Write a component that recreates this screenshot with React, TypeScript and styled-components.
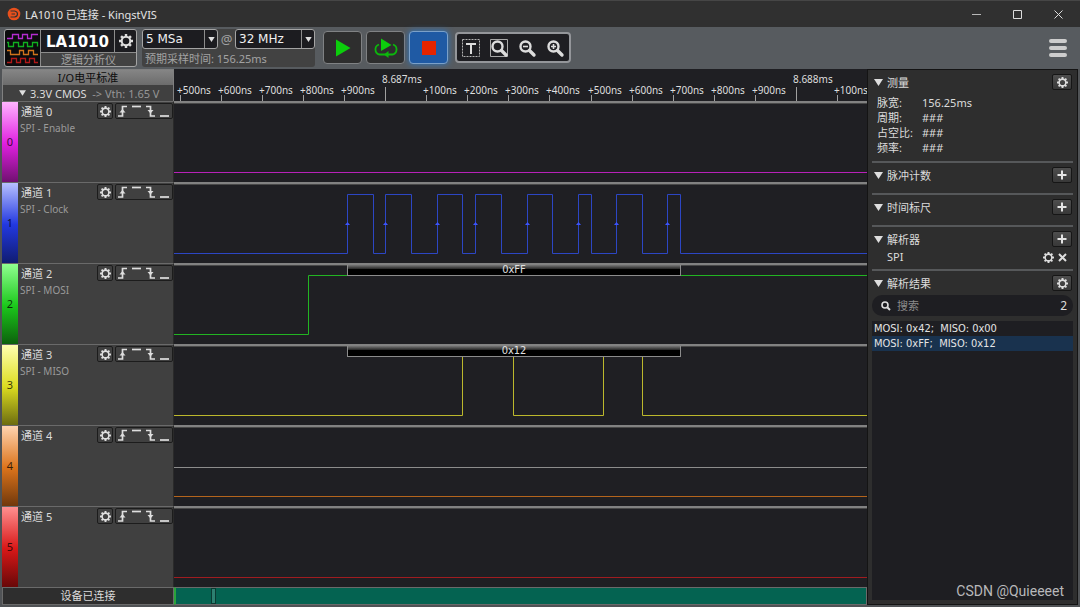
import React from "react";
import styled, { createGlobalStyle, css } from "styled-components";

const GlobalStyle = createGlobalStyle`
  *, *::before, *::after { box-sizing: border-box; }
  html, body { margin: 0; padding: 0; background: #505356; }
  body {
    font-family: "Noto Sans", "Noto Sans CJK SC", sans-serif;
    font-size: 11px;
    color: #dcdcdc;
  }
  button, input, select { font: inherit; color: inherit; margin: 0; padding: 0; }
  h1, h2, ul, dl, dd, dt, p { margin: 0; padding: 0; font: inherit; list-style: none; }
  svg { display: block; flex: none; }
`;

const Window = styled.div`
  display: flex;
  flex-direction: column;
  min-height: 100vh;
  background: #505356;
`;

const TitleBar = styled.header`
  display: flex;
  align-items: center;
  height: 27px;
  padding: 0 1px 0 7px;
  gap: 4px;
  background: #303030;
  border-top: 1px solid #464646;
`;

const Title = styled.h1`
  flex: 1;
  color: #e4e4e4;
`;

const WindowButton = styled.button`
  display: grid;
  place-items: center;
  width: 41px;
  height: 26px;
  border: 0;
  background: none;
`;

const WindowButtons = styled.div`
  display: flex;
`;

const ToolBar = styled.div`
  display: flex;
  align-items: center;
  height: 42px;
  padding: 0 11px 0 4px;
  background: #575b5f;
`;

const Device = styled.div`
  display: grid;
  grid-template-columns: 35px 73px 21px;
  grid-template-rows: 22px 13px;
  gap: 1px;
  border: 1px solid #a4a4a4;
  border-radius: 3px;
  background: #8c8c8c;
  overflow: hidden;
`;

const DeviceLogo = styled.div`
  grid-row: 1 / 3;
  background: #0b0b0d;
`;

const DeviceName = styled.div`
  background: #1c1c20;
  color: #fff;
  font: bold 15px/24px "DejaVu Sans", sans-serif;
  text-align: center;
`;

const DeviceGear = styled.button`
  display: grid;
  place-items: center;
  border: 0;
  background: #1c1c20;
`;

const DeviceKind = styled.div`
  grid-column: 2 / 4;
  background: #424242;
  color: #a2a2a2;
  line-height: 13px;
  text-align: center;
`;

const Sampling = styled.div`
  width: 173px;
  height: 38px;
  margin-left: 5px;
  border-radius: 3px;
  background: #424242;
  color: #a2a2a2;
`;

const SamplingRow = styled.div`
  display: flex;
  align-items: center;
  justify-content: space-between;
  font-size: 13px;
  line-height: 20px;
`;

const SamplingNote = styled.p`
  padding-left: 3px;
  line-height: 20px;
`;

const SelectBox = styled.label<{ $wide?: boolean }>`
  position: relative;
  display: block;
  width: ${(p) => (p.$wide ? 80 : 76)}px;
  height: 20px;
  border: 1px solid #a4a4a4;
  border-radius: 3px;
  background: #1c1c20;
`;

const Select = styled.select`
  display: block;
  width: 100%;
  height: 18px;
  padding-left: 3px;
  border: 0;
  background: none;
  color: #f0f0f0;
  appearance: none;
  font: 12px/18px "DejaVu Sans", sans-serif;
`;

const SelectArrow = styled.span`
  position: absolute;
  top: 0;
  right: 0;
  display: grid;
  place-items: center;
  width: 13px;
  height: 18px;
  border-left: 1px solid #8c8c8c;
  pointer-events: none;
`;

const RunButtons = styled.div`
  display: flex;
  gap: 4px;
  margin: 0 7px 1px 8px;
`;

const RunButton = styled.button<{ $active?: boolean }>`
  display: grid;
  place-items: center;
  width: 39px;
  height: 33px;
  border: 1px solid #808284;
  border-radius: 4px;
  background: #2e2e2e;
  ${(p) =>
    p.$active &&
    css`
      background: #1f5aa4;
      border-color: #7ba0c8;
      box-shadow: 0 0 6px #2a78c8;
    `}
`;

const ViewTools = styled.div`
  display: flex;
  align-items: center;
  justify-content: space-around;
  width: 116px;
  height: 31px;
  margin-bottom: 1px;
  border: 2px solid #94969a;
  border-radius: 4px;
  background: #1e1e22;
`;

const PlainButton = styled.button`
  display: grid;
  place-items: center;
  border: 0;
  background: none;
`;

const MenuButton = styled(PlainButton)`
  margin-left: auto;
`;

const Body = styled.div`
  flex: 1;
  display: grid;
  grid-template-columns: 172px minmax(0, 1fr) 211px;
  padding: 0 2px 3px 2px;
`;

const Workspace = styled.main`
  grid-column: 1 / 3;
  display: flex;
  flex-direction: column;
  background: #1f1f23;
`;

const Row = styled.div`
  display: grid;
  grid-template-columns: 172px minmax(0, 1fr);
`;

const RulerRow = styled(Row)`
  height: 32px;
`;

const LevelPanel = styled.div`
  display: flex;
  flex-direction: column;
  border: 1px solid #808080;
  border-bottom: 0;
`;

const LevelTitle = styled.div`
  height: 15px;
  background: linear-gradient(#858585, #6c6c6c);
  color: #0c0c0c;
  line-height: 15px;
  text-align: center;
`;

const LevelButton = styled.button`
  display: flex;
  align-items: center;
  gap: 4px;
  height: 16px;
  padding-left: 16px;
  border: 0;
  background: #404040;
  white-space: pre;
`;

const Muted = styled.span`
  color: #969696;
`;

const RulerSvg = styled.svg`
  width: 100%;
  height: 32px;
  font: 10px "Noto Sans", sans-serif;
  fill: #dedede;
`;

const ChannelRow = styled(Row)`
  height: 81px;
`;

const ChannelPanel = styled.section`
  display: flex;
  background: #404040;
  border-top: 1px solid #6a6a6a;
  border-right: 1px solid #2a2a2a;
  border-bottom: 1px solid #161616;
`;

const ChannelTab = styled.div<{ $from: string; $mid: string; $to: string }>`
  width: 16px;
  background: linear-gradient(${(p) => p.$from}, ${(p) => p.$mid} 52%, ${(p) => p.$to});
  color: rgba(0, 0, 0, 0.75);
  line-height: 80px;
  text-align: center;
`;

const ChannelInfo = styled.div`
  flex: 1;
  padding: 1px 0 0 2px;
`;

const ChannelHead = styled.div`
  display: flex;
  align-items: center;
  gap: 2px;
  height: 16px;
  padding-left: 1px;
`;

const ChannelName = styled.h2`
  flex: 1;
`;

const ChannelRole = styled.p`
  color: #9a9a9a;
  font-size: 10px;
  line-height: 18px;
`;

const ChannelGear = styled.button`
  display: grid;
  place-items: center;
  width: 16px;
  height: 16px;
  border: 1px solid #1c1c1c;
  border-radius: 2px;
  background: #404040;
`;

const Triggers = styled.div`
  display: flex;
  height: 16px;
  border: 1px solid #1c1c1c;
  border-radius: 2px;
`;

const Track = styled.div`
  position: relative;
  height: 81px;
  overflow: hidden;
  background: #1f1f23;
  border-top: 2px solid #828282;
  box-shadow: inset 0 1px 0 #484848;
`;

const Wave = styled.svg`
  position: absolute;
  left: 0;
  top: -2px;
  width: 100%;
  height: 81px;
  fill: none;
`;

const DecodeBox = styled.div`
  position: absolute;
  left: 173px;
  top: -2px;
  width: 334px;
  height: 13px;
  border: 1px solid #8c8c8c;
  border-top-color: #a0a0a0;
  background: linear-gradient(#8c8c8c, #262626 45%, #000 50%);
  color: #e0e0e0;
  font: 11px/12px "DejaVu Sans Condensed", "Noto Sans", sans-serif;
  text-align: center;
`;

const FooterRow = styled(Row)`
  flex: 1;
  min-height: 17px;
`;

const Status = styled.div`
  border: 1px solid #6a6a6a;
  background: #2e2e2e;
  line-height: 16px;
  text-align: center;
`;

const Overview = styled.div`
  position: relative;
  border: 1px solid #6a6a6a;
  border-left: 2px solid #2aa33a;
  background: #046351;
`;

const OverviewThumb = styled.div`
  position: absolute;
  left: 35px;
  top: 0;
  bottom: 0;
  width: 5px;
  border: 1px solid #0a3a32;
  background: #2d8071;
`;

const Sidebar = styled.aside`
  position: relative;
  display: flex;
  flex-direction: column;
  padding: 0 4px 4px 4px;
  border: 1px solid #141414;
  background: #2e2e2e;
`;

const Section = styled.section<{ $first?: boolean; $grow?: boolean }>`
  display: flex;
  flex-direction: column;
  padding-bottom: ${(p) => (p.$grow ? 0 : 6)}px;
  border-top: ${(p) => (p.$first ? 0 : 2)}px solid #56585a;
  flex: ${(p) => (p.$grow ? 1 : "none")};
`;

const SectionHead = styled.div`
  display: flex;
  align-items: center;
  gap: 4px;
  height: 24px;
  padding: 0 1px 0 2px;
`;

const SectionTitle = styled.h2`
  flex: 1;
`;

const SectionButton = styled.button`
  display: grid;
  place-items: center;
  width: 20px;
  height: 16px;
  border: 1px solid #161616;
  border-radius: 2px;
  background: linear-gradient(#4e4e4e, #383838);
`;

const Measures = styled.dl`
  display: grid;
  grid-template-columns: 45px 1fr;
  padding: 1px 0 0 5px;
  line-height: 15px;
`;

const Parser = styled.div`
  display: flex;
  align-items: center;
  gap: 4px;
  height: 12px;
  padding: 0 6px 0 15px;
  line-height: 12px;
`;

const ParserName = styled.span`
  flex: 1;
`;

const Search = styled.label`
  display: flex;
  align-items: center;
  gap: 6px;
  height: 21px;
  padding: 0 6px 0 9px;
  border-radius: 10px;
  background: #1e1e22;
`;

const SearchInput = styled.input`
  flex: 1;
  min-width: 0;
  border: 0;
  outline: 0;
  background: none;
  &::placeholder { color: #8a8a8a; opacity: 1; }
`;

const SearchCount = styled.span`
  font-size: 12px;
`;

const Results = styled.ul`
  flex: 1;
  margin-top: 5px;
  background: #1e1e22;
  font: 11px/15px "DejaVu Sans Condensed", "Noto Sans", sans-serif;
`;

const Result = styled.li<{ $selected?: boolean }>`
  padding-left: 2px;
  background: ${(p) => (p.$selected ? "#19324e" : "transparent")};
  color: #e4e4e4;
  white-space: pre;
`;

const Watermark = styled.p`
  position: absolute;
  right: 13px;
  bottom: 5px;
  color: #b8b8ba;
  font: 14px/16px Roboto, sans-serif;
`;

const Gear = ({ size = 11 }: { size?: number }) => (
  <svg width={size} height={size} viewBox="-8 -8 16 16" fill="none" stroke="#dedede">
    <circle r="4.900" strokeWidth="2.300" />
    {[0, 45, 90, 135, 180, 225, 270, 315].map((a) => (
      <path key={a} d="M0 -5V-8" strokeWidth="2.800" transform={`rotate(${a})`} />
    ))}
  </svg>
);

const Plus = () => (
  <svg width="10" height="10" stroke="#e4e4e4" strokeWidth="2">
    <path d="M5 0.500V9.500M0.500 5H9.500" />
  </svg>
);

const Triangle = ({ w = 9, h = 7 }: { w?: number; h?: number }) => (
  <svg width={w} height={h} viewBox="0 0 9 7" fill="#dedede">
    <path d="M0 0H9L4.500 7Z" />
  </svg>
);

const Magnifier = ({ sign, framed }: { sign?: string; framed?: boolean }) => (
  <svg width="20" height="20" fill="none" stroke="#dcdcdc">
    {framed && <path d="M1.500 1.500H18.500V18.500H1.500Z" stroke="#a8a8a8" />}
    <circle cx="8.500" cy="8.500" r="5" strokeWidth="2.400" />
    <path d="M12.500 12.500L17 17" strokeWidth="3.400" strokeLinecap="round" />
    {sign && <path d={sign} strokeWidth="1.600" />}
  </svg>
);

const triggerShapes = [
  { label: "上升沿", d: "M2 12H6.500V2.500H11", arrow: "M3.500 8.500H9.500L6.500 5Z" },
  { label: "高电平", d: "M2 2.500H11", arrow: "" },
  { label: "下降沿", d: "M2 2.500H6.500V12H11", arrow: "M3.500 6H9.500L6.500 9.500Z" },
  { label: "低电平", d: "M2 12H11", arrow: "" },
];

const clockEdges = [
  [173, 199], [211, 237], [263, 288], [301, 327],
  [353, 378], [404, 417], [442, 468], [493, 506],
];

const clockPath =
  "M0 71.500" + clockEdges.map(([a, b]) => `H${a + 0.5}V12.500H${b + 0.5}V71.500`).join("") + "H9999";

type Channel = {
  role?: string;
  tab: [string, string, string];
  stroke: string;
  d: string;
  decoded?: string;
  arrows?: boolean;
  guide?: boolean;
};

const channels: Channel[] = [
  { role: "SPI - Enable", tab: ["#ffb4ff", "#e020e0", "#701070"], stroke: "#b821b8", d: "M0 71.500H9999" },
  { role: "SPI - Clock", tab: ["#b8c0ff", "#2238e0", "#101c70"], stroke: "#2c46c4", d: clockPath, arrows: true },
  { role: "SPI - MOSI", tab: ["#90ff90", "#1cc81c", "#0c600c"], stroke: "#22b422", d: "M0 71.500H134.500V12.500H9999", decoded: "0xFF" },
  {
    role: "SPI - MISO", tab: ["#ffffb0", "#dcdc20", "#6c6c10"], stroke: "#bcb82c", decoded: "0x12",
    d: "M0 71.500H288.500V12.500H339.500V71.500H429.500V12.500H468.500V71.500H9999",
  },
  { tab: ["#ffd4b0", "#dc741c", "#70380c"], stroke: "#b4641c", d: "M0 71.500H9999", guide: true },
  { tab: ["#ff9090", "#d81818", "#680808"], stroke: "#a01c20", d: "M0 71.500H9999" },
];

const ticks = [
  "+500ns", "+600ns", "+700ns", "+800ns", "+900ns", "8.687ms",
  "+100ns", "+200ns", "+300ns", "+400ns", "+500ns", "+600ns", "+700ns", "+800ns", "+900ns", "8.688ms", "+100ns",
];

const measures = [
  ["脉宽:", "156.25ms"],
  ["周期:", "###"],
  ["占空比:", "###"],
  ["频率:", "###"],
];

const Ruler = () => (
  <RulerSvg>
    {ticks.map((label, i) => {
      const x = 6 + Math.round(i * 41.05);
      const major = label.endsWith("ms");
      return (
        <g key={i}>
          <path d={`M${x + 0.5} ${major ? 18 : 26}V32`} stroke="#a0a0a0" />
          <text x={x - 3} y={major ? 14 : 25}>{label}</text>
        </g>
      );
    })}
  </RulerSvg>
);

const ChannelLane = ({ channel, index }: { channel: Channel; index: number }) => (
  <ChannelRow>
    <ChannelPanel>
      <ChannelTab $from={channel.tab[0]} $mid={channel.tab[1]} $to={channel.tab[2]}>{index}</ChannelTab>
      <ChannelInfo>
        <ChannelHead>
          <ChannelName>通道 {index}</ChannelName>
          <ChannelGear aria-label="通道设置"><Gear /></ChannelGear>
          <Triggers>
            {triggerShapes.map((t) => (
              <PlainButton key={t.label} aria-label={t.label}>
                <svg width="14" height="14" fill="none" stroke="#dedede" strokeWidth="1.700">
                  <path d={t.d} />
                  {t.arrow && <path d={t.arrow} fill="#dedede" stroke="none" />}
                </svg>
              </PlainButton>
            ))}
          </Triggers>
        </ChannelHead>
        {channel.role && <ChannelRole>{channel.role}</ChannelRole>}
      </ChannelInfo>
    </ChannelPanel>
    <Track>
      <Wave>
        {channel.guide && <path d="M0 42.500H9999" stroke="#8c8c8c" />}
        <path d={channel.d} stroke={channel.stroke} />
        {channel.arrows &&
          clockEdges.map(([a]) => <path key={a} d={`M${a - 2} 43H${a + 3}L${a + 0.5} 40Z`} fill="#3c54ff" />)}
      </Wave>
      {channel.decoded && <DecodeBox>{channel.decoded}</DecodeBox>}
    </Track>
  </ChannelRow>
);

export default function App() {
  return (
    <>
      <GlobalStyle />
      <Window>
        <TitleBar>
          <svg width="14" height="14" fill="none">
            <circle cx="7" cy="7" r="6.300" fill="#e8501c" />
            <path d="M3.500 4H7.500Q10.500 4.500 10.500 7Q10.500 9.500 7.500 10H3.500M4.500 7H8" stroke="#303030" strokeWidth="1.200" />
          </svg>
          <Title>LA1010 已连接 - KingstVIS</Title>
          <WindowButtons>
            <WindowButton aria-label="最小化">
              <svg width="9" height="9" stroke="#b8b8b8"><path d="M0 4.500H9" /></svg>
            </WindowButton>
            <WindowButton aria-label="最大化">
              <svg width="9" height="9" stroke="#dcdcdc" fill="none"><path d="M0.500 0.500H8.500V8.500H0.500Z" /></svg>
            </WindowButton>
            <WindowButton aria-label="关闭">
              <svg width="9" height="9" stroke="#dcdcdc"><path d="M0.500 0.500L8.500 8.500M8.500 0.500L0.500 8.500" /></svg>
            </WindowButton>
          </WindowButtons>
        </TitleBar>

        <ToolBar>
          <Device>
            <DeviceLogo>
              <svg width="35" height="36" fill="none" strokeWidth="1.300">
                <path d="M2 8.500H7.500V4.500H13.500V8.500H17.500V4.500H22.500V8.500H26.500V4.500H33" stroke="#b42cd0" />
                <path d="M2 12.500H3.500V16.500H8.500V12.500H13.500V16.500H18.500V12.500H22.500V16.500H27.500V12.500H32.500V16.500" stroke="#10b020" />
                <path d="M2 20.500H5.500V24.500H14.500V20.500H18.500V24.500H23.500V20.500H28.500V24.500H33" stroke="#d0741c" />
                <path d="M2 32.500H6.500V28.500H11.500V32.500H15.500V28.500H20.500V32.500H24.500V28.500H29.500V32.500H33" stroke="#b01818" />
              </svg>
            </DeviceLogo>
            <DeviceName>LA1010</DeviceName>
            <DeviceGear aria-label="设备设置"><Gear size={14} /></DeviceGear>
            <DeviceKind>逻辑分析仪</DeviceKind>
          </Device>

          <Sampling>
            <SamplingRow>
              <SelectBox>
                <Select aria-label="采样深度" defaultValue="5 MSa"><option>5 MSa</option></Select>
                <SelectArrow><Triangle w={7} h={5} /></SelectArrow>
              </SelectBox>
              @
              <SelectBox $wide>
                <Select aria-label="采样率" defaultValue="32 MHz"><option>32 MHz</option></Select>
                <SelectArrow><Triangle w={7} h={5} /></SelectArrow>
              </SelectBox>
            </SamplingRow>
            <SamplingNote>预期采样时间: 156.25ms</SamplingNote>
          </Sampling>

          <RunButtons>
            <RunButton aria-label="开始">
              <svg width="16" height="18" fill="#0cce0c"><path d="M1 0.500L15.500 9L1 17.500Z" /></svg>
            </RunButton>
            <RunButton aria-label="循环采样">
              <svg width="26" height="22" fill="none">
                <path d="M6 7.500A5.200 5.200 0 0 0 6.500 17.500H19.500A5.200 5.200 0 0 0 20 7.500" stroke="#0cb80c" strokeWidth="1.800" />
                <path d="M8 1.500L18.500 8L8 14Z" fill="#0cce0c" />
                <path d="M15.500 14V21L11 17.500Z" fill="#0cb80c" />
              </svg>
            </RunButton>
            <RunButton $active aria-label="停止">
              <svg width="14" height="14" fill="#e42400"><path d="M0 0H14V14H0Z" /></svg>
            </RunButton>
          </RunButtons>

          <ViewTools>
            <PlainButton aria-label="文字标注">
              <svg width="20" height="20" fill="none" stroke="#dcdcdc">
                <path d="M1.500 1.500H18.500V18.500H1.500Z" strokeDasharray="2 1" stroke="#b4b4b4" />
                <path d="M5 6H15M10 6V16" strokeWidth="2" />
              </svg>
            </PlainButton>
            <PlainButton aria-label="缩放至全部"><Magnifier framed /></PlainButton>
            <PlainButton aria-label="缩小"><Magnifier sign="M6 8.500H11" /></PlainButton>
            <PlainButton aria-label="放大"><Magnifier sign="M6 8.500H11M8.500 6V11" /></PlainButton>
          </ViewTools>

          <MenuButton aria-label="菜单">
            <svg width="22" height="20" stroke="#cdcdcd" strokeWidth="4" strokeLinecap="round">
              <path d="M4 3H18M4 10H18M4 17H18" />
            </svg>
          </MenuButton>
        </ToolBar>

        <Body>
          <Workspace>
            <RulerRow>
              <LevelPanel>
                <LevelTitle>I/O电平标准</LevelTitle>
                <LevelButton>
                  <Triangle w={7} h={6} />
                  <span>3.3V CMOS  <Muted>-&gt; Vth: 1.65 V</Muted></span>
                </LevelButton>
              </LevelPanel>
              <Ruler />
            </RulerRow>
            {channels.map((c, i) => <ChannelLane key={i} channel={c} index={i} />)}
            <FooterRow>
              <Status>设备已连接</Status>
              <Overview><OverviewThumb /></Overview>
            </FooterRow>
          </Workspace>

          <Sidebar>
            <Section $first>
              <SectionHead>
                <Triangle /><SectionTitle>测量</SectionTitle>
                <SectionButton aria-label="测量设置"><Gear /></SectionButton>
              </SectionHead>
              <Measures>
                {measures.map(([k, v]) => (
                  <React.Fragment key={k}><dt>{k}</dt><dd>{v}</dd></React.Fragment>
                ))}
              </Measures>
            </Section>
            <Section>
              <SectionHead>
                <Triangle /><SectionTitle>脉冲计数</SectionTitle>
                <SectionButton aria-label="添加脉冲计数"><Plus /></SectionButton>
              </SectionHead>
            </Section>
            <Section>
              <SectionHead>
                <Triangle /><SectionTitle>时间标尺</SectionTitle>
                <SectionButton aria-label="添加时间标尺"><Plus /></SectionButton>
              </SectionHead>
            </Section>
            <Section>
              <SectionHead>
                <Triangle /><SectionTitle>解析器</SectionTitle>
                <SectionButton aria-label="添加解析器"><Plus /></SectionButton>
              </SectionHead>
              <Parser>
                <ParserName>SPI</ParserName>
                <PlainButton aria-label="解析器设置"><Gear /></PlainButton>
                <PlainButton aria-label="移除解析器">
                  <svg width="9" height="9" stroke="#dedede" strokeWidth="2"><path d="M1 1L8 8M8 1L1 8" /></svg>
                </PlainButton>
              </Parser>
            </Section>
            <Section $grow>
              <SectionHead>
                <Triangle /><SectionTitle>解析结果</SectionTitle>
                <SectionButton aria-label="结果设置"><Gear /></SectionButton>
              </SectionHead>
              <Search>
                <svg width="10" height="10" fill="none" stroke="#dedede">
                  <circle cx="4" cy="4" r="3" strokeWidth="1.600" />
                  <path d="M6.500 6.500L9 9" strokeWidth="2" />
                </svg>
                <SearchInput placeholder="搜索" aria-label="搜索" />
                <SearchCount>2</SearchCount>
              </Search>
              <Results>
                <Result>MOSI: 0x42;  MISO: 0x00</Result>
                <Result $selected>MOSI: 0xFF;  MISO: 0x12</Result>
              </Results>
            </Section>
            <Watermark>CSDN @Quieeeet</Watermark>
          </Sidebar>
        </Body>
      </Window>
    </>
  );
}
